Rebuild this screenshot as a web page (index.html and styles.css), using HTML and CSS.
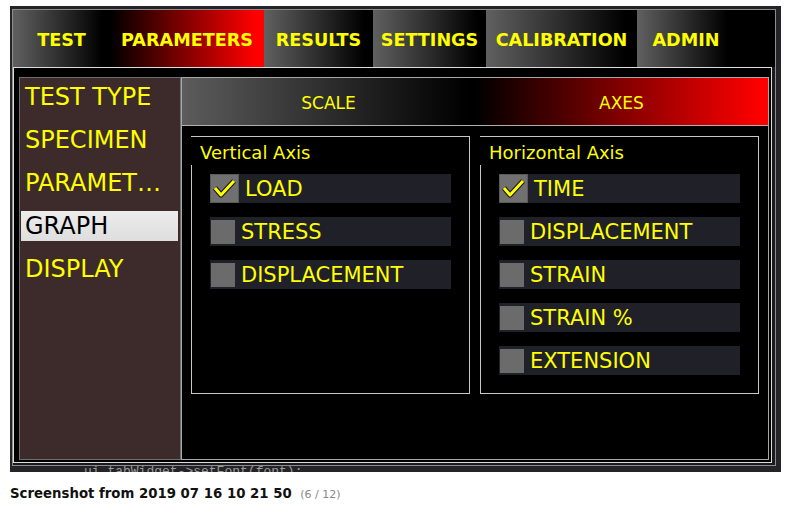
FILE: index.html
```html
<!DOCTYPE html>
<html lang="en">
<head>
  <meta charset="UTF-8">
  <title>Screenshot from 2019 07 16 10 21 50</title>
  <link rel="stylesheet" href="styles.css">
</head>
<body>

<!-- main window -->
<div class="window">
  <div class="frame">

    <!-- top tab bar -->
    <div class="tabs">
      <div class="tab tab-test">TEST</div>
      <div class="tab tab-params active">PARAMETERS</div>
      <div class="tab tab-results">RESULTS</div>
      <div class="tab tab-settings">SETTINGS</div>
      <div class="tab tab-calib">CALIBRATION</div>
      <div class="tab tab-admin">ADMIN</div>
    </div>

    <div class="pane">
      <!-- parameter sections -->
      <ul class="menu">
        <li>TEST TYPE</li>
        <li>SPECIMEN</li>
        <li>PARAMET…</li>
        <li class="selected">GRAPH</li>
        <li>DISPLAY</li>
      </ul>

      <div class="content">
        <div class="subtabs">
          <div class="subtab">SCALE</div>
          <div class="subtab active">AXES</div>
        </div>

        <div class="groups">
          <div class="group">
            <div class="group-title">Vertical Axis</div>
            <div class="option checked">
              <span class="box">
                <svg width="28" height="29" viewBox="0 0 28 29">
                  <polyline points="5,14 11,21 24,7" fill="none" stroke="#111" stroke-width="5" stroke-linejoin="round"/>
                  <polyline points="5,14 11,21 24,7" fill="none" stroke="#ffff00" stroke-width="3" stroke-linejoin="round"/>
                </svg>
              </span>
              LOAD
            </div>
            <div class="option"><span class="box"></span>STRESS</div>
            <div class="option"><span class="box"></span>DISPLACEMENT</div>
          </div>

          <div class="group">
            <div class="group-title">Horizontal Axis</div>
            <div class="option checked">
              <span class="box">
                <svg width="28" height="29" viewBox="0 0 28 29">
                  <polyline points="5,14 11,21 24,7" fill="none" stroke="#111" stroke-width="5" stroke-linejoin="round"/>
                  <polyline points="5,14 11,21 24,7" fill="none" stroke="#ffff00" stroke-width="3" stroke-linejoin="round"/>
                </svg>
              </span>
              TIME
            </div>
            <div class="option"><span class="box"></span>DISPLACEMENT</div>
            <div class="option"><span class="box"></span>STRAIN</div>
            <div class="option"><span class="box"></span>STRAIN %</div>
            <div class="option"><span class="box"></span>EXTENSION</div>
          </div>
        </div>
      </div>
    </div>
  </div>

  <!-- editor text peeking out below the window -->
  <div class="code-peek">ui.tabWidget-&gt;setFont(font);</div>
</div>

<p class="caption">Screenshot from 2019 07 16 10 21 50 <span class="count">(6 / 12)</span></p>

</body>
</html>
```

FILE: styles.css
```css
* {
  margin: 0;
  padding: 0;
  box-sizing: border-box;
}

body {
  font-family: "DejaVu Sans", sans-serif;
  background-color: white;
}

.window {
  margin: 6px 0 0 10px;
  width: 771px;
  height: 466px;
  padding: 3px 5px 0 2px;
  background: #232328;
}

.frame {
  height: 457px;
  border: 1px solid #8c8c8c;
  background: #1a1a1c;
  display: flex;
  flex-direction: column;
}

/* top tabs */
.tabs {
  display: flex;
  height: 57px;
  background: #000;
}

.tab {
  display: flex;
  align-items: center;
  justify-content: center;
  padding-top: 2px;
  font-weight: bold;
  font-size: 17.6px;
  color: #ffff00;
  background: linear-gradient(to right, #606060, #000 92%);
}

.tab.active {
  background: linear-gradient(to right, #000, #ff0000 95%);
}

.tab-test { width: 97px; }
.tab-params { width: 154px; }
.tab-results { width: 109px; }
.tab-settings { width: 113px; }
.tab-calib { width: 151px; }
.tab-admin { width: 98px; }

.pane {
  flex: 1;
  display: flex;
  margin: 0 3px 2px 0;
  padding: 9px 2px 2px 5px;
  border: 1px solid #dcdcdc;
  background: #000;
}

/* left section list */
.menu {
  list-style: none;
  width: 162px;
  padding-top: 4px;
  border: 1px solid #6e6e6e;
  background: #3d2b2b;
}

.menu li {
  height: 30px;
  line-height: 30px;
  margin: 0 2px 13px 1px;
  padding-left: 4px;
  font-size: 24px;
  color: #ffff00;
  white-space: nowrap;
}

.menu li.selected {
  background: linear-gradient(#ececec, #dedede);
  color: #000;
}

/* right content */
.content {
  flex: 1;
  border: 1px solid #a8a8a8;
  background: #000;
}

.subtabs {
  display: flex;
  height: 48px;
  border-bottom: 1px solid #b0b0b0;
}

.subtab {
  flex: 1;
  display: flex;
  align-items: center;
  justify-content: center;
  padding-top: 3px;
  font-size: 17px;
  color: #ffff00;
  background: linear-gradient(to right, #5c5c5c, #000 97%);
}

.subtab.active {
  background: linear-gradient(to right, #000, #ff0000 98%);
}

.groups {
  display: flex;
  gap: 10px;
  padding: 10px 9px 0 9px;
}

.group {
  flex: 1;
  height: 258px;
  border: 1px solid #c8c8c8;
}

/* title covers the top of the left border */
.group-title {
  width: fit-content;
  height: 28px;
  line-height: 28px;
  margin-left: -1px;
  margin-bottom: 9px;
  padding: 2px 4px 0 9px;
  background: #000;
  font-size: 18px;
  color: #ffff00;
}

.option {
  display: flex;
  align-items: center;
  width: 241px;
  height: 29px;
  margin: 0 0 14px 18px;
  background: #202029;
  font-size: 21px;
  color: #ffff00;
}

.box {
  width: 24px;
  height: 24px;
  margin: 0 6px 0 1px;
  background: #6b6b6b;
}

.option.checked .box {
  width: 29px;
  height: 29px;
  margin-left: 0;
  border: 1px solid #5a5a5a;
  background: #707070;
}

.box svg {
  display: block;
  margin: -1px 0 0 -1px;
}

.code-peek {
  height: 6px;
  overflow: hidden;
  padding-left: 72px;
  font-family: "Liberation Mono", monospace;
  font-size: 13px;
  line-height: 12px;
  color: #9c9c9c;
}

.caption {
  margin: 14px 0 0 10px;
  font-weight: bold;
  font-size: 13.3px;
  line-height: 16px;
  color: #111;
}

.caption .count {
  margin-left: 4px;
  font-weight: normal;
  font-size: 11px;
  color: #888;
}
```
